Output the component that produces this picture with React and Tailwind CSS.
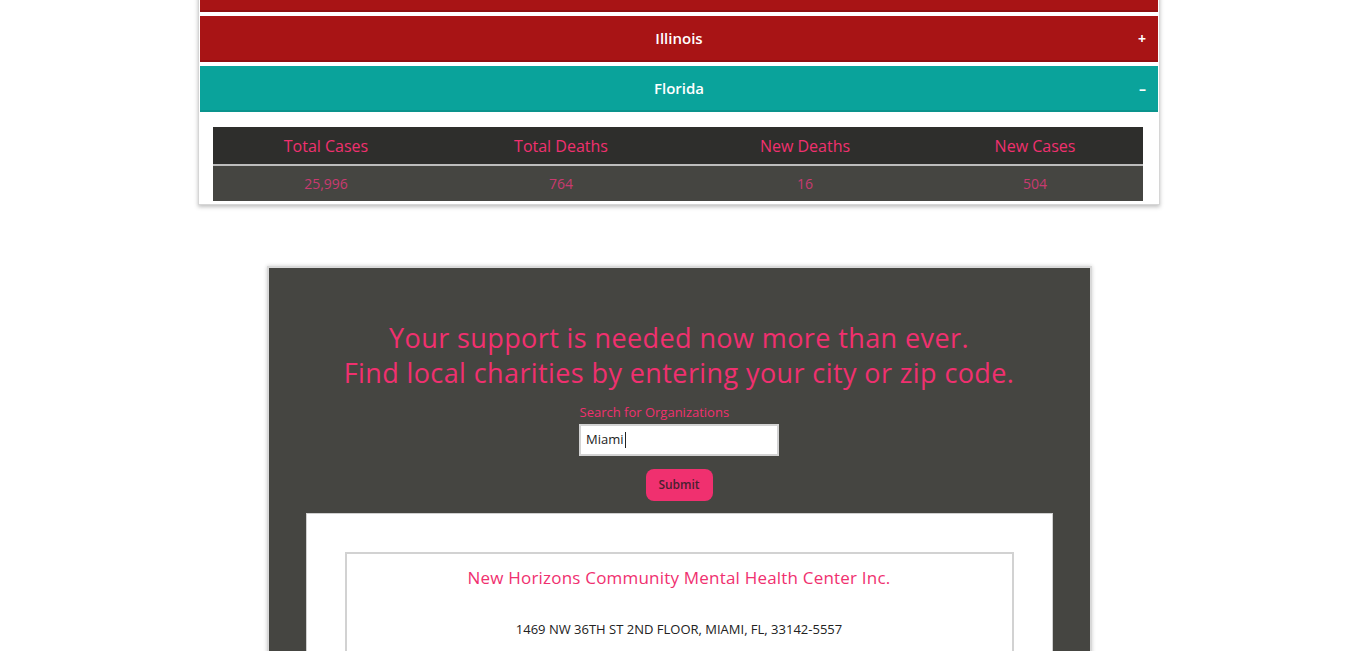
import React from 'react';

const stats = [
  { label: 'Total Cases', value: '25,996' },
  { label: 'Total Deaths', value: '764' },
  { label: 'New Deaths', value: '16' },
  { label: 'New Cases', value: '504' },
];

function StateBar({ name, open, className }) {
  return (
    <div className={`relative flex items-center justify-center h-[46px] text-white text-[15px] font-semibold ${className}`}>
      {name && <span>{name}</span>}
      {name && <span className="absolute right-[12px] text-[14px] font-bold">{open ? '–' : '+'}</span>}
    </div>
  );
}

export default function App() {
  return (
    <div className="min-h-screen bg-white overflow-hidden" style={{ fontFamily: '"Open Sans", "Noto Sans", sans-serif' }}>
      <div className="flex flex-col items-center pl-[7px]">
        {/* State accordion card */}
        <div className="w-[962px] -mt-[36px] bg-white border border-[#d6d6d6] shadow-[0_2px_4px_rgba(0,0,0,0.25)] px-[1px] pt-[1px] pb-[3px]">
          <div className="flex flex-col gap-[4px]">
            <StateBar className="bg-[#a81415] border-b-2 border-[#8f1011]" />
            <StateBar name="Illinois" className="bg-[#a81415] border-b-2 border-[#8f1011]" />
            <StateBar name="Florida" open className="bg-[#0aa39b] border-b-2 border-[#0a948d]" />
          </div>
          <div className="ml-[13px] mr-[15px] mt-[15px] bg-[#c4c4c4]">
            <div className="grid grid-cols-[226px_244px_244px_216px] bg-[#2e2e2c] h-[37px] items-center text-[#f0306f] text-[16px]">
              {stats.map(s => (
                <div key={s.label} className="text-center">{s.label}</div>
              ))}
            </div>
            <div className="h-[2px] bg-[#bdbdbd]" />
            <div className="grid grid-cols-[226px_244px_244px_216px] bg-[#454541] h-[35px] items-center text-[#c93a70] text-[14px]">
              {stats.map(s => (
                <div key={s.label} className="text-center">{s.value}</div>
              ))}
            </div>
          </div>
        </div>

        {/* Charity search card */}
        <div className="w-[825px] mt-[61px] bg-[#454541] border-2 border-[#d9d9d9] shadow-[0_0_4px_rgba(0,0,0,0.2)] pt-[52px] px-[37px]">
          <h2 className="text-center text-[#f0306f] text-[27px] tracking-[0.4px] leading-[35px]">
            Your support is needed now more than ever.
            <br />
            Find local charities by entering your city or zip code.
          </h2>
          <div className="flex flex-col items-center mt-[14px]">
            <label className="text-[#f0306f] text-[13px] leading-[16px] w-[199px] text-left">Search for Organizations</label>
            <div className="mt-[4px] w-[200px] h-[32px] bg-white border-2 border-[#d3d3d3] flex items-center px-[5px] text-[13px] text-[#222]">
              Miami<span className="inline-block w-[1px] h-[16px] bg-[#222] ml-[1px]" />
            </div>
            <button className="mt-[13px] w-[67px] h-[32px] rounded-lg bg-[#f0306f] text-[#4a2030] text-[12px] font-semibold">
              Submit
            </button>
          </div>
          <div className="mt-[12px] bg-white border border-[#cfcfcf] px-[38px] pt-[38px] pb-[40px]">
            <div className="border-2 border-[#d2d2d2] pt-[12px] pb-[40px] text-center">
              <div className="text-[#f0306f] text-[17px] tracking-[0.2px] leading-[24px]">New Horizons Community Mental Health Center Inc.</div>
              <div className="mt-[30px] text-[#222] text-[13px]">1469 NW 36TH ST 2ND FLOOR, MIAMI, FL, 33142-5557</div>
            </div>
          </div>
        </div>
      </div>
    </div>
  );
}
